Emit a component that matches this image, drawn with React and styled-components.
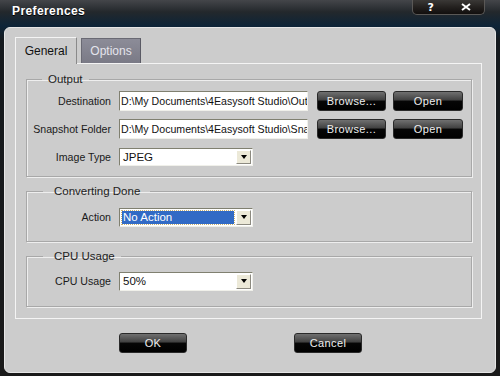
import React from "react";
import styled, { createGlobalStyle } from "styled-components";

const GlobalStyle = createGlobalStyle`
  html, body {
    margin: 0;
    padding: 0;
    background: #1a1a1a;
  }
  body {
    font-family: "Liberation Sans", Arial, sans-serif;
    font-size: 11px;
  }
`;

const Window = styled.div`
  width: 500px;
  height: 376px;
  box-sizing: border-box;
  display: flex;
  flex-direction: column;
  background: linear-gradient(#44464a 0px, #23282c 12px, #0d2438 26px, #151a1e 40px, #1a1a1a 100%);
  padding: 0 4px 3px 4px;
  position: relative;
`;

const TitleBar = styled.div`
  height: 27px;
  display: flex;
  align-items: flex-start;
  padding-left: 8px;
  box-sizing: border-box;
`;

const Title = styled.div`
  color: #fff;
  font-weight: bold;
  font-size: 12px;
  letter-spacing: 0.4px;
  margin-top: 4px;
  text-shadow: 0 1px 0 #000;
`;

const TitleButtons = styled.div`
  position: absolute;
  top: 0;
  left: 412px;
  width: 73px;
  height: 15px;
  display: flex;
  background: linear-gradient(#3a3836, #221f1d 55%, #120f0e);
  border: 1px solid #5a5856;
  border-top: none;
  border-radius: 0 0 5px 5px;
  box-sizing: border-box;
`;

const TitleBtn = styled.div`
  flex: 1;
  display: flex;
  align-items: center;
  justify-content: center;
  color: #fff;
  font-weight: bold;
  font-size: 11px;
  font-family: "DejaVu Sans", sans-serif;
`;

const Body = styled.div`
  flex: 1;
  background: #cccccc;
  border-radius: 6px;
  border: 1px solid #e6e6e6;
  box-sizing: border-box;
  padding: 9px 13px 0 10px;
  display: flex;
  flex-direction: column;
`;

const Tabs = styled.div`
  display: flex;
  align-items: flex-end;
  height: 26px;
  gap: 4px;
`;

const Tab = styled.div`
  width: ${({ w }) => w}px;
  height: ${({ active }) => (active ? 27 : 25)}px;
  box-sizing: border-box;
  display: flex;
  align-items: center;
  justify-content: center;
  font-size: 12px;
  color: ${({ active }) => (active ? "#111" : "#e4e4ec")};
  background: ${({ active }) =>
    active ? "#cccccc" : "linear-gradient(#8c8c98, #7a7a86)"};
  border-top: 1px solid ${({ active }) => (active ? "#f4f4f4" : "#6a6a74")};
  border-left: 1px solid ${({ active }) => (active ? "#f4f4f4" : "#6a6a74")};
  border-right: 1px solid ${({ active }) => (active ? "#8a8a8a" : "#5a5a64")};
  margin-bottom: ${({ active }) => (active ? "-1px" : "0")};
  position: relative;
  z-index: ${({ active }) => (active ? 1 : 0)};
`;

const Panel = styled.div`
  height: 256px;
  box-sizing: border-box;
  border: 1px solid #f4f4f4;
  padding: 8px 9px 0 10px;
  display: flex;
  flex-direction: column;
  gap: 7px;
`;

const Group = styled.fieldset`
  margin: 0;
  height: ${({ h }) => h}px;
  box-sizing: border-box;
  border: 1px solid #a8a8a8;
  box-shadow: inset 1px 1px 0 #eeeeee, 1px 1px 0 #eeeeee;
  padding: ${({ pt }) => pt}px 8px 0 0;
  display: flex;
  flex-direction: column;
  gap: 8px;
`;

const Legend = styled.legend`
  margin-left: ${({ ml }) => ml}px;
  padding: 0 ${({ pr }) => pr}px 0 ${({ pl }) => pl}px;
  height: 14px;
  line-height: 14px;
  font-size: 11.5px;
  color: #222;
`;

const Row = styled.div`
  display: flex;
  align-items: center;
  height: 20px;
`;

const Label = styled.div`
  width: 84px;
  text-align: right;
  padding-right: 8px;
  font-size: 10.6px;
  color: #1a1a1a;
  white-space: nowrap;
`;

const TextField = styled.div`
  width: 189px;
  height: 20px;
  box-sizing: border-box;
  background: #fff;
  border-top: 1px solid #808070;
  border-left: 1px solid #808070;
  border-right: 1px solid #f0f0ea;
  border-bottom: 1px solid #f0f0ea;
  padding: 0 1px;
  display: flex;
  align-items: center;
  overflow: hidden;
  white-space: nowrap;
  font-size: 10.6px;
  color: #111;
`;

const DarkButton = styled.div`
  width: ${({ w }) => w}px;
  height: 20px;
  box-sizing: border-box;
  margin-left: ${({ ml }) => ml}px;
  border-radius: 3px;
  border: 1px solid #2a2a2a;
  background: linear-gradient(#707070 0%, #404040 45%, #060606 50%, #000 100%);
  color: #eee;
  font-size: 11px;
  letter-spacing: 0.4px;
  display: flex;
  align-items: center;
  justify-content: center;
`;

const Select = styled.div`
  width: 134px;
  height: ${({ h }) => h || 19}px;
  box-sizing: border-box;
  background: #fff;
  border-top: 1px solid #808070;
  border-left: 1px solid #808070;
  border-right: 1px solid #f0f0ea;
  border-bottom: 1px solid #f0f0ea;
  display: flex;
  align-items: stretch;
`;

const SelectValue = styled.div`
  flex: 1;
  display: flex;
  align-items: center;
  margin: ${({ hl }) => (hl ? "2px 1px 2px 2px" : "0")};
  padding-left: ${({ hl }) => (hl ? 1 : 3)}px;
  background: ${({ hl }) => (hl ? "#316ac5" : "transparent")};
  color: ${({ hl }) => (hl ? "#fff" : "#111")};
  outline: ${({ hl }) => (hl ? "1px dotted #c8b070" : "none")};
  font-size: 11.5px;
`;

const Arrow = styled.div`
  width: 15px;
  margin: 1px;
  background: #ece9d8;
  border-top: 1px solid #fff;
  border-left: 1px solid #fff;
  border-right: 1px solid #8c8a80;
  border-bottom: 1px solid #8c8a80;
  box-sizing: border-box;
  display: flex;
  align-items: center;
  justify-content: center;

  &::after {
    content: "";
    border-left: 3.5px solid transparent;
    border-right: 3.5px solid transparent;
    border-top: 4px solid #000;
  }
`;

const Footer = styled.div`
  display: flex;
  padding: 14px 0 0 104px;
`;

export default function App() {
  return (
    <>
      <GlobalStyle />
      <Window>
        <TitleBar>
          <Title>Preferences</Title>
        </TitleBar>
        <TitleButtons>
          <TitleBtn>?</TitleBtn>
          <TitleBtn>
            <svg width="10" height="8" viewBox="0 0 10 8">
              <path d="M1 1 L9 7 M9 1 L1 7" stroke="#fff" strokeWidth="2" />
            </svg>
          </TitleBtn>
        </TitleButtons>
        <Body>
          <Tabs>
            <Tab active w={62}>General</Tab>
            <Tab w={60}>Options</Tab>
          </Tabs>
          <Panel>
            <Group h={105} pt={5}>
              <Legend ml={15} pl={6} pr={6}>Output</Legend>
              <Row>
                <Label>Destination</Label>
                <TextField>D:\My Documents\4Easysoft Studio\Outp</TextField>
                <DarkButton w={69} ml={9}>Browse...</DarkButton>
                <DarkButton w={70} ml={7}>Open</DarkButton>
              </Row>
              <Row>
                <Label>Snapshot Folder</Label>
                <TextField>D:\My Documents\4Easysoft Studio\Sna</TextField>
                <DarkButton w={69} ml={9}>Browse...</DarkButton>
                <DarkButton w={70} ml={7}>Open</DarkButton>
              </Row>
              <Row>
                <Label>Image Type</Label>
                <Select h={18}>
                  <SelectValue>JPEG</SelectValue>
                  <Arrow />
                </Select>
              </Row>
            </Group>
            <Group h={58} pt={9}>
              <Legend ml={16} pl={11} pr={10}>Converting Done</Legend>
              <Row>
                <Label>Action</Label>
                <Select>
                  <SelectValue hl>No Action</SelectValue>
                  <Arrow />
                </Select>
              </Row>
            </Group>
            <Group h={58} pt={8}>
              <Legend ml={16} pl={11} pr={6}>CPU Usage</Legend>
              <Row>
                <Label>CPU Usage</Label>
                <Select>
                  <SelectValue>50%</SelectValue>
                  <Arrow />
                </Select>
              </Row>
            </Group>
          </Panel>
          <Footer>
            <DarkButton w={68} ml={0}>OK</DarkButton>
            <DarkButton w={68} ml={107}>Cancel</DarkButton>
          </Footer>
        </Body>
      </Window>
    </>
  );
}
